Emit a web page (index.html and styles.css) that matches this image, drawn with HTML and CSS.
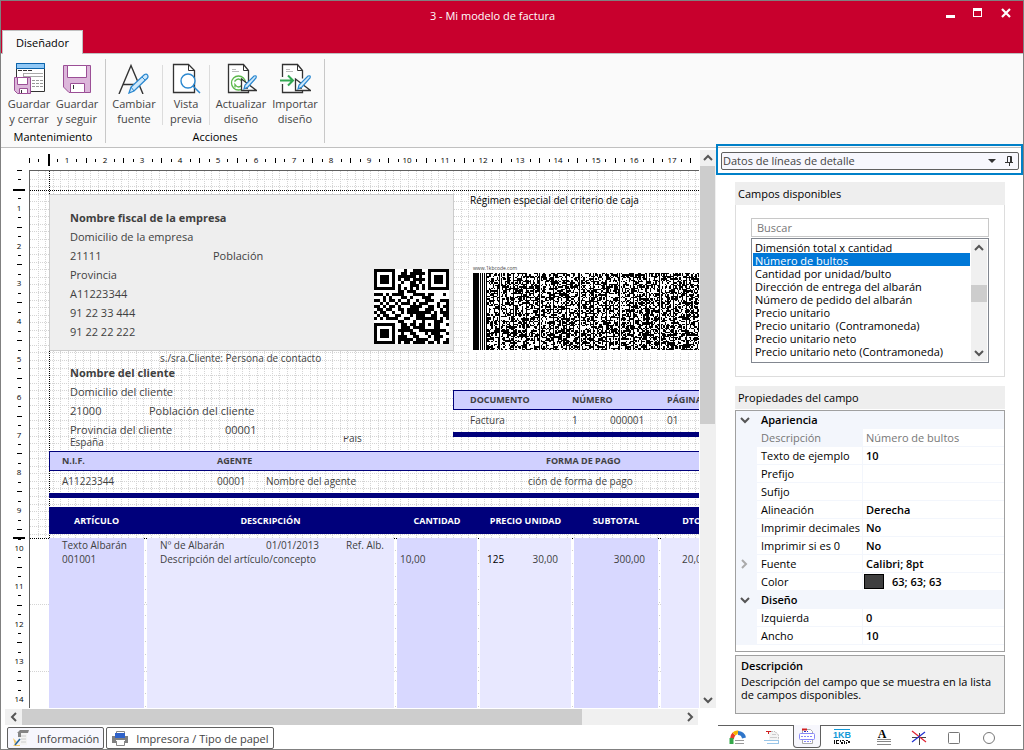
FILE: index.html
```html
<!DOCTYPE html>
<html lang="es">
<head>
<meta charset="utf-8">
<title>3 - Mi modelo de factura</title>
<link rel="stylesheet" href="styles.css">
</head>
<body>
<div class="window">
  <header class="titlebar">
    <h1 class="title">3 - Mi modelo de factura</h1>
    <div class="controls">
      <button class="control" aria-label="Minimizar"><svg width="12" height="12"><path d="M1 9h9v3H1z" fill="#fff"/></svg></button>
      <button class="control" aria-label="Maximizar"><svg width="12" height="12"><path fill-rule="evenodd" d="M1 2h9v9H1zM2 5h7v5H2z" fill="#fff"/></svg></button>
      <button class="control" aria-label="Cerrar"><svg width="12" height="12"><path d="M2 3l8 8M10 3l-8 8" stroke="#fff" stroke-width="2.2"/></svg></button>
    </div>
    <button class="ribbon-tab">Diseñador</button>
  </header>

  <div class="ribbon">
    <section class="group group-keep">
      <div class="tools">
        <button class="tool tool-48">
          <svg class="tool-icon" viewBox="0 0 32 32"><path d="M3.500 1.500h28v28h-28z" fill="#fff" stroke="#333"/><path d="M3.500 1.500h28v5h-28z" fill="#90c8f6" stroke="#0a64ad"/><path d="M5 8.500h15" stroke="#333" stroke-dasharray="4 1"/><path d="M10 11.500h20M10 14.500h20M10.500 11v5" stroke="#aaa"/><path d="M19 18.500h11M19 21.500h11M19 24.500h11" stroke="#999" stroke-dasharray="3 1"/><path d="M1.500 15.500h16v16h-13l-3-3z" fill="#dcb6da" stroke="#9b4f96"/><path d="M4.500 15.500h10v7h-10zM6.500 26.500h8v5h-8z" fill="#fff" stroke="#9b4f96"/><path d="M8.500 28v3" stroke="#333"/></svg>
          <span>Guardar<br>y cerrar</span>
        </button>
        <button class="tool tool-48">
          <svg class="tool-icon" viewBox="0 0 32 32"><path d="M2.500 3.500h27v27H8l-5.500-5.500z" fill="#dcb6da" stroke="#9b4f96"/><path d="M6.500 3.500h19v12h-19zM9.500 21.500h14v9h-14z" fill="#fff" stroke="#9b4f96"/><path d="M12.500 23v4" stroke="#333"/></svg>
          <span>Guardar<br>y seguir</span>
        </button>
      </div>
      <h2 class="group-name">Mantenimiento</h2>
    </section>
    <section class="group group-actions">
      <div class="tools">
        <button class="tool tool-56">
          <svg class="tool-icon" viewBox="0 0 32 32"><path d="M1 32L13 3.500l12 28.500M5.500 22.500h15" fill="none" stroke="#333" stroke-width="1.400"/><path d="M11 31l2-6L26.500 12.500q2-1 3 .5t0 3L16 29z" fill="#cfe8fa" stroke="#2b88d0" stroke-width="1.300"/><path d="M13 25l3 4M24 15l3 3" stroke="#2b88d0"/></svg>
          <span>Cambiar<br>fuente</span>
        </button>
        <span class="tool-rule"></span>
        <button class="tool tool-46">
          <svg class="tool-icon" viewBox="0 0 32 32"><path d="M3.500 2.500h15l6 6v22h-21z" fill="#fff" stroke="#333" stroke-width="1.300"/><path d="M18.500 2.500v6h6" fill="none" stroke="#333"/><circle cx="18" cy="19" r="7" fill="#fff" stroke="#2b88d0" stroke-width="1.400"/><path d="M23 24l7 7" stroke="#2b88d0" stroke-width="1.500"/></svg>
          <span>Vista<br>previa</span>
        </button>
        <span class="tool-rule"></span>
        <button class="tool tool-62">
          <svg class="tool-icon" viewBox="0 0 32 32"><path d="M3.500 2.500h15l5 6v22h-20z" fill="#fff" stroke="#333" stroke-width="1.300"/><path d="M18.500 2.500v6h5" fill="none" stroke="#333"/><path d="M7 7.500h4M7 9.500h7" stroke="#bbb"/><circle cx="13.500" cy="21" r="7" fill="#fff" stroke="#5cb84a" stroke-width="1.300"/><path d="M9.500 19.500q4-5 7.500 0v-3M17.500 22.500q-4 5-7.500 0v3" fill="none" stroke="#5cb84a" stroke-width="1.300"/><path d="M16.500 17v11.500h15zM20 24v2h3" fill="#fff" stroke="#333" stroke-width="1.300"/><path d="M19 27l1-4 9-9q3-1 2 2l-8 9z" fill="#cfe8fa" stroke="#2b88d0" stroke-width="1.200"/></svg>
          <span>Actualizar<br>diseño</span>
        </button>
        <button class="tool tool-46">
          <svg class="tool-icon" viewBox="0 0 32 32"><path d="M3.500 15V2.500h15l5 6v8M3.500 22v8.500h20V27" fill="#fff" stroke="#333" stroke-width="1.300"/><path d="M18.500 2.500v6h5" fill="none" stroke="#333"/><path d="M7 7.500h4M7 9.500h7" stroke="#bbb"/><path d="M1 18.500h12M9 13.500l5 5-5 5" fill="none" stroke="#32a852" stroke-width="2"/><path d="M16.500 17v11.500h15zM20 24v2h3" fill="#fff" stroke="#333" stroke-width="1.300"/><path d="M19 27l1-4 9-9q3-1 2 2l-8 9z" fill="#cfe8fa" stroke="#2b88d0" stroke-width="1.200"/></svg>
          <span>Importar<br>diseño</span>
        </button>
      </div>
      <h2 class="group-name">Acciones</h2>
    </section>
  </div>

  <div class="workspace">
    <main class="left">
      <div class="designer">
        <svg class="ruler ruler-x" id="ruler-x"></svg>
        <svg class="ruler ruler-y" id="ruler-y"></svg>
        <div class="sheet">
          <svg class="grid-lines" id="grid-lines"></svg>
          <section class="block company">
            <strong>Nombre fiscal de la empresa</strong>
            <span>Domicilio de la empresa</span>
            <span class="pair"><span>21111</span><span>Población</span></span>
            <span>Provincia</span>
            <span>A11223344</span>
            <span>91 22 33 444</span>
            <span>91 22 22 222</span>
          </section>
          <svg class="block qr" id="qr" viewBox="0 0 25 25" role="img" aria-label="Código QR"></svg>
          <p class="block small regime">Régimen especial del criterio de caja</p>
          <div class="block barcode">
            <span class="barcode-url">www.1kbcode.com</span>
            <svg id="barcode" class="barcode-image" role="img" aria-label="Código 1KB"></svg>
          </div>
          <p class="block small contact">s./sra.Cliente: Persona de contacto</p>
          <section class="block client">
            <strong>Nombre del cliente</strong>
            <span>Domicilio del cliente</span>
            <span class="pair pair-town"><span>21000</span><span>Población del cliente</span></span>
            <span class="pair pair-code"><span>Provincia del cliente</span><span>00001</span></span>
          </section>
          <p class="block small country">España</p>
          <p class="block small country-label"><span>País</span></p>

          <section class="block document">
            <div class="band doc-cols"><b>DOCUMENTO</b><b>NÚMERO</b><b>PÁGINA</b></div>
            <div class="values doc-cols"><span>Factura</span><span class="number"><span>1</span><span>000001</span></span><span>01</span></div>
          </section>
          <section class="block agent">
            <div class="band agent-cols"><b>N.I.F.</b><b>AGENTE</b><b class="pay-name">FORMA DE PAGO</b></div>
            <div class="values agent-cols"><span>A11223344</span><span class="agent-name"><span>00001</span><span>Nombre del agente</span></span><span>ción de forma de pago</span></div>
          </section>
          <section class="block lines-head line-cols">
            <b>ARTÍCULO</b><b>DESCRIPCIÓN</b><b>CANTIDAD</b><b>PRECIO UNIDAD</b><b>SUBTOTAL</b><b>DTO.</b>
          </section>
          <section class="block lines line-cols">
            <div class="cell strong-cell first"><span>Texto Albarán</span><span>001001</span></div>
            <div class="cell first"><span class="note"><span>Nº de Albarán</span><span>01/01/2013</span><span>Ref. Alb.</span></span><span>Descripción del artículo/concepto</span></div>
            <div class="cell strong-cell tight">10,00</div>
            <div class="cell price"><span class="dark">125</span><span>30,00</span></div>
            <div class="cell strong-cell right">300,00</div>
            <div class="cell discount">20,00</div>
          </section>
        </div>
        <div class="bar bar-y">
          <button class="arrow" aria-label="Subir"><svg width="10" height="8"><path d="M1 6l4-4 4 4" class="chev"/></svg></button>
          <div class="track"><div class="thumb"></div></div>
          <button class="arrow" aria-label="Bajar"><svg width="10" height="8"><path d="M1 2l4 4 4-4" class="chev"/></svg></button>
        </div>
        <div class="bar bar-x">
          <button class="arrow" aria-label="Izquierda"><svg width="8" height="10"><path d="M6 1L2 5l4 4" class="chev"/></svg></button>
          <div class="track"><div class="thumb"></div></div>
          <button class="arrow" aria-label="Derecha"><svg width="8" height="10"><path d="M2 1l4 4-4 4" class="chev"/></svg></button>
        </div>
      </div>
      <nav class="sheet-tabs">
        <button class="sheet-tab active"><svg width="18" height="18"><path d="M6 4h9v12H6z" fill="#f3f3f3"/><path d="M5 4l3-3h9l-1 3H9v4H6V4" fill="#858585"/><path d="M9 7h5M9 10h5M9 13h5" stroke="#ccc"/><path d="M1 9l4 4-4 4h7v-1H3z" fill="#f0c868"/><path d="M3 16l5-6" stroke="#24639b" stroke-width="1.500"/></svg>Información</button>
        <button class="sheet-tab"><svg width="18" height="18"><path d="M5.500 6V2.500h8V6M5.500 12v4.500h8V12" fill="#fff" stroke="#888"/><path d="M1 7h16v7h-3v-3H5v3H1z" fill="#808080"/><path d="M4 4h10v5H4z" fill="#2f62c9"/></svg>Impresora / Tipo de papel</button>
      </nav>
    </main>

    <aside class="side">
      <div class="focus-frame">
        <div class="source">
          <select class="source-select" aria-label="Datos"><option>Datos de líneas de detalle</option></select>
          <svg class="source-arrow" width="8" height="4"><path d="M0 0h8L4 4z" fill="#333"/></svg>
          <button class="pin" aria-label="Fijar"><svg width="9" height="10"><path d="M2.500 6V.5h4V6M5.500 1v5M0 6.500h8M4.500 7v3" fill="none" stroke="#333"/></svg></button>
        </div>
      </div>
      <div class="panels">
        <section class="fields">
          <h2 class="panel-title">Campos disponibles</h2>
          <div class="fields-body">
            <input class="search" type="text" placeholder="Buscar" aria-label="Buscar">
            <div class="list-box">
              <select class="list" size="10" aria-label="Campos disponibles">
                <option>Dimensión total x cantidad</option>
                <option selected>Número de bultos</option>
                <option>Cantidad por unidad/bulto</option>
                <option>Dirección de entrega del albarán</option>
                <option>Número de pedido del albarán</option>
                <option>Precio unitario</option>
                <option>Precio unitario&nbsp; (Contramoneda)</option>
                <option>Precio unitario neto</option>
                <option>Precio unitario neto (Contramoneda)</option>
                <option>Peso unitario</option>
              </select>
              <div class="bar list-bar">
                <button class="arrow" aria-label="Subir"><svg width="10" height="8"><path d="M1 6l4-4 4 4" class="chev"/></svg></button>
                <div class="track"><div class="thumb"></div></div>
                <button class="arrow" aria-label="Bajar"><svg width="10" height="8"><path d="M1 2l4 4 4-4" class="chev"/></svg></button>
              </div>
            </div>
          </div>
        </section>

        <section class="properties">
          <h2 class="panel-title">Propiedades del campo</h2>
          <div class="props-box">
            <table class="props">
              <colgroup><col class="col-mark"><col class="col-name"><col></colgroup>
              <tbody>
                <tr class="section"><td><svg width="10" height="8"><path d="M1 2l4 4 4-4" class="chev"/></svg></td><th colspan="2">Apariencia</th></tr>
                <tr class="readonly"><td></td><th>Descripción</th><td>Número de bultos</td></tr>
                <tr><td></td><th>Texto de ejemplo</th><td>10</td></tr>
                <tr><td></td><th>Prefijo</th><td></td></tr>
                <tr><td></td><th>Sufijo</th><td></td></tr>
                <tr><td></td><th>Alineación</th><td>Derecha</td></tr>
                <tr><td></td><th>Imprimir decimales</th><td>No</td></tr>
                <tr><td></td><th>Imprimir si es 0</th><td>No</td></tr>
                <tr><td><svg width="8" height="10"><path d="M2 1l4 4-4 4" class="chev chev-pale"/></svg></td><th>Fuente</th><td>Calibri; 8pt</td></tr>
                <tr><td></td><th>Color</th><td class="color-value"><span class="swatch"></span>63; 63; 63</td></tr>
                <tr class="section"><td><svg width="10" height="8"><path d="M1 2l4 4 4-4" class="chev"/></svg></td><th colspan="2">Diseño</th></tr>
                <tr><td></td><th>Izquierda</th><td>0</td></tr>
                <tr><td></td><th>Ancho</th><td>10</td></tr>
              </tbody>
            </table>
          </div>
          <div class="help"><h3>Descripción</h3><p>Descripción del campo que se muestra en la lista de campos disponibles.</p></div>
        </section>
      </div>
      <nav class="tool-tabs">
        <button class="tool-tab" aria-label="Imagen"><svg width="18" height="18"><path d="M4 10q0-3 2-5" stroke="#e83c28" stroke-width="4" fill="none"/><path d="M3.500 15V9" stroke="#35a84a" stroke-width="4"/><path d="M6 5q2-2 4-1.500" stroke="#f4b400" stroke-width="4" fill="none"/><path d="M10 4q5 0 6 5" stroke="#2f75c9" stroke-width="4" fill="none"/><path d="M7 11.500h9M7 14.500h9" stroke="#999"/></svg></button>
        <button class="tool-tab" aria-label="Pie"><svg width="18" height="18"><path d="M6 2h6l3 3v6H6z" fill="#f4f4f4"/><path d="M8 2.500h4M12.500 3l3 3v5" fill="none" stroke="#bbb" stroke-dasharray="2 1"/><path d="M3 2.500h5M5.500 3v2" stroke="#d02020"/><path d="M9 5.500h4M7 8.500h7" stroke="#ccc"/><path d="M1 11.500h15M15.500 11v4M4 14.500h12" fill="none" stroke="#9ac6e8"/></svg></button>
        <button class="tool-tab active" aria-label="Datos de líneas de detalle"><svg width="18" height="18"><path d="M4.500 7V2.500h8l2 2V7M4.500 11v5.500h10V11" fill="#fff" stroke="#aaa"/><path d="M4 2.500h5" stroke="#d02020" stroke-width="2"/><path d="M6 4.500h4" stroke="#2030c0" stroke-dasharray="2 1"/><rect x="1.500" y="6.500" width="15" height="6" rx="1" fill="#fff" stroke="#8888f8"/><path d="M3 9.500h12M6 14.500h7" stroke="#8888f8" stroke-dasharray="2 1"/></svg></button>
        <button class="tool-tab" aria-label="Código 1KB"><svg width="18" height="18"><text x="9" y="9" text-anchor="middle" class="kb-text">1KB</text><path d="M1 .5h16" stroke="#1299d8"/><path d="M1 11h1v4H1zM3 11h3v1H4v2h2v1H3zM7 11h1v2h-1zM8 13h2v2H8zM9 11h2v1H9zM11 12h1v3h-1zM13 11h2v1h-2zM13 13h1v2h-1zM15 12h2v2h-2z" fill="#111"/></svg></button>
        <button class="tool-tab after-gap" aria-label="Texto"><svg width="18" height="18"><text x="7" y="9" text-anchor="middle" class="a-text">A</text><path d="M2 10.500h14M2 12.500h14M2 15.500h14" stroke="#888"/></svg></button>
        <button class="tool-tab" aria-label="Línea"><svg width="18" height="18"><path d="M9.500 4v12M2 8.500h14" stroke="#444"/><path d="M2 2l14 11" stroke="#e02030" stroke-width="1.200"/><path d="M15 3L2 13" stroke="#2030d0" stroke-width="1.200"/></svg></button>
        <button class="tool-tab" aria-label="Rectángulo"><svg width="18" height="18"><rect x="3.500" y="3.500" width="11" height="11" rx="1" fill="#fff" stroke="#777"/></svg></button>
        <button class="tool-tab" aria-label="Elipse"><svg width="18" height="18"><circle cx="9" cy="9" r="5.500" fill="#fff" stroke="#777"/></svg></button>
      </nav>
    </aside>
  </div>
</div>
<script src="designer.js"></script>
</body>
</html>
```
FILE: designer.js
```js
const CM = 96 / 2.54;
const NS = 'http://www.w3.org/2000/svg';

function add(parent, tag, attrs, text) {
  const el = document.createElementNS(NS, tag);
  for (const key in attrs) el.setAttribute(key, attrs[key]);
  if (text !== undefined) el.textContent = text;
  parent.appendChild(el);
}

// Rulers: a number on each centimetre, a long tick on each half, a short one on each quarter.
function drawRuler(svg, vertical, start, markers) {
  svg.replaceChildren();
  let ticks = markers;
  const mid = vertical ? 14 : 12;
  const box = svg.getBoundingClientRect();
  const end = (vertical ? box.height : box.width) - 4;
  for (let q = 0; start + q * CM / 4 < end; q++) {
    const p = Math.round(start + q * CM / 4);
    if (q % 4 === 0 && q > 0) {
      add(svg, 'text', vertical ? { x: mid, y: p + 3 } : { x: p, y: mid + 3 }, q / 4);
      continue;
    }
    if (q === 2) continue;
    const half = q % 2 ? 1 : 2;
    const len = half * 2 + 1;
    ticks += vertical ? `M${mid - half} ${p}h${len}v1h-${len}z` : `M${p} ${mid - half}v${len}h1v-${len}z`;
  }
  add(svg, 'path', { d: ticks });
}

function drawRulers() {
  drawRuler(document.getElementById('ruler-x'), false, 24, 'M43 6h2v12h-2z');
  // The second marker is the end of the header area.
  drawRuler(document.getElementById('ruler-y'), true, 22, 'M8 41h12v2H8zM8 389h12v2H8z');
}
drawRulers();
addEventListener('resize', drawRulers);

// Snap grid of 2 mm, and the dotted margins over it.
const grid = document.getElementById('grid-lines');
let lines = '';
for (let i = 1; i < 300; i++) {
  const p = Math.round(i * CM / 5) + 0.5;
  lines += `M${p} 0V367`;
  if (p < 367) lines += `M0 ${p}H3000`;
}
add(grid, 'path', { d: lines, class: 'dots' });
add(grid, 'path', { d: 'M19.5 0V367M0 19.5H3000M0 367.5H3000', class: 'margins' });
add(grid, 'path', { d: 'M0 433.5H3000M0 500.5H3000', class: 'dots' });
add(grid, 'path', { d: 'M115.5 379V3000M365.5 379V3000M448.5 379V3000M542.5 379V3000M629.5 379V3000', class: 'sparse' });

const qrRows = [
  '1111111000100111001111111',
  '1000001001101111101000001',
  '1011101011111101001011101',
  '1011101010110111101011101',
  '1011101001001101001011101',
  '1000001010001110101000001',
  '1111111010101010101111111',
  '0000000011011100000000000',
  '1110101111000111101100010',
  '0001010001101000111000000',
  '1101011010010010011100111',
  '0010100101110101110001001',
  '1101011010001111001101011',
  '0110110011011110011100101',
  '1011001001011111111010111',
  '0101100110001011100110011',
  '1010111100110011111110101',
  '0000000011000100100011100',
  '1111111001101101101011001',
  '1000001001110111100011000',
  '1011101011111001111111110',
  '1011101001001100010111001',
  '1011101011100110001011100',
  '1000001011111011110011001',
  '1111111010110111101101011'
];
let modules = '';
qrRows.forEach((row, y) => [...row].forEach((v, x) => { if (v === '1') modules += `M${x} ${y}h1v1h-1z`; }));
const qr = document.getElementById('qr');
add(qr, 'path', { d: 'M0 0h25v25H0z', fill: '#fff' });
add(qr, 'path', { d: modules, fill: '#000', 'shape-rendering': 'crispEdges' });

// Dense 2D code: start bars, then data modules with a guide bar on every tenth column.
let seed = 7;
const random = () => (seed = (seed * 16807) % 2147483647) / 2147483647;
const edge = n => Math.round(n * 4 / 3);
let bars = 'M0 0h6v77H0zM7 0h1v77H7zM9 0h1v77H9zM11 0h1v77H11z';
for (let col = 0; col < 400; col++) {
  const x = 13 + edge(col);
  const w = edge(col + 1) - edge(col);
  if (col % 10 === 0) { bars += `M${x} 0h1v77h-1z`; continue; }
  for (let row = 0; row < 58; row++) {
    const y = edge(row);
    const h = edge(row + 1) - y;
    if (random() < 0.52) bars += `M${x} ${y}h${w}v${h}h-${w}z`;
  }
}
add(document.getElementById('barcode'), 'path', { d: bars, 'shape-rendering': 'crispEdges' });
```
FILE: styles.css
```css
* { box-sizing: border-box; }

body {
  margin: 0;
  font: 11px/15px "Open Sans", "Noto Sans", sans-serif;
  color: #000;
}

h1, h2, h3, p { margin: 0; font: inherit; }

button, input, select {
  margin: 0;
  padding: 0;
  border: 0;
  background: none;
  font: inherit;
  color: inherit;
}

svg { display: block; }

.window {
  display: flex;
  flex-direction: column;
  height: 100vh;
  border: 1px solid #808080;
  background: #fff;
}

/* Title bar */
.titlebar {
  display: grid;
  grid-template-columns: 1fr 86px;
  grid-template-rows: 29px 23px;
  flex: none;
  background: #c8002d;
  border-bottom: 1px solid #c0c0c0;
}
.title { padding: 7px 0 0 47px; text-align: center; color: #fff; }
.controls { display: flex; justify-content: space-around; padding: 5px 3px 0 0; }
.control { width: 22px; height: 14px; display: flex; justify-content: center; }
.ribbon-tab {
  justify-self: start;
  width: 81px;
  margin-left: 1px;
  height: 24px;
  background: #fafafa;
  border: 1px solid #c0c0c0;
  border-bottom: 0;
}

/* Ribbon */
.ribbon {
  display: flex;
  flex: none;
  height: 94px;
  padding: 5px 0 4px;
  background: #fafafa;
  border-bottom: 1px solid #c0c0c0;
}
.group {
  display: flex;
  flex-direction: column;
  border-right: 1px solid #c8c8c8;
}
.group-keep { padding: 0 4px; }
.group-actions { padding-right: 6px; }
.tools { display: flex; padding-top: 3px; }
.tool {
  display: flex;
  flex-direction: column;
  align-items: center;
  gap: 2px;
  color: #444;
  white-space: nowrap;
}
.tool-46 { width: 46px; }
.tool-48 { width: 48px; }
.tool-56 { width: 56px; }
.tool-62 { width: 62px; }
.tool-icon { width: 32px; height: 32px; }
.tool-rule { width: 1px; height: 60px; margin-top: 3px; background: #dcdcdc; }
.group-name { margin-top: auto; text-align: center; line-height: 12px; }
.group-actions .group-name { padding-left: 6px; }

/* Workspace */
.workspace { display: flex; flex: 1; min-height: 0; }
.left { flex: 1; min-width: 0; display: flex; flex-direction: column; }
.designer {
  flex: 1;
  min-height: 0;
  display: grid;
  grid-template-columns: 24px 1fr 17px;
  grid-template-rows: 22px 1fr 17px;
  padding-left: 4px;
}
.ruler { width: 100%; height: 100%; overflow: hidden; font-size: 8px; text-anchor: middle; }
.ruler-x { grid-area: 1 / 1 / 2 / 3; }
.ruler-y { grid-area: 1 / 1 / 3 / 2; }

.bar { display: flex; background: #f0f0f0; }
.bar-y { grid-area: 1 / 3 / 3 / 4; flex-direction: column; margin: 2px 0 0 1px; }
.bar-x { grid-area: 3 / 1 / 4 / 3; margin: 1px 1px 0 0; }
.arrow { flex: none; width: 16px; height: 16px; display: flex; align-items: center; justify-content: center; }
.bar-x .arrow { width: 17px; }
.track { flex: 1; }
.thumb { background: #cdcdcd; }
.bar-y .thumb { width: 15px; height: 49%; }
.bar-x .thumb { height: 100%; width: 85%; }
.chev { fill: none; stroke: #555; stroke-width: 2; }
.chev-pale { stroke: #aaa; }

/* Sheet: a free canvas, each block sits where the user dropped it */
.sheet {
  grid-area: 2 / 2 / 3 / 3;
  position: relative;
  overflow: hidden;
  border: solid #606060;
  border-width: 1px 0 0 1px;
  color: #3f3f3f;
  white-space: nowrap;
}
.grid-lines { position: absolute; inset: 0; width: 100%; height: 100%; }
.dots { fill: none; stroke: #d4d4d4; stroke-dasharray: 1 1; shape-rendering: crispEdges; }
.sparse { fill: none; stroke: #ccc; stroke-dasharray: 1 12; }
.margins { fill: none; stroke: #000; stroke-dasharray: 1 1; shape-rendering: crispEdges; }
.block { position: absolute; }
.small, .values, .lines { font-size: 10px; }
.band, .lines-head { font-size: 9px; }

.company {
  left: 19px; top: 23px;
  width: 405px; height: 157px;
  display: flex;
  flex-direction: column;
  padding: 13px 0 0 20px;
  line-height: 19px;
  background: #eee;
  border: 1px solid #ccc;
}
.pair { display: grid; grid-template-columns: 143px auto; }
.pair-town { grid-template-columns: 79px auto; }
.pair-code { grid-template-columns: 155px auto; }
.qr { left: 344px; top: 98px; width: 75px; height: 75px; }
.regime { left: 440px; top: 22px; color: #000; }
.barcode { left: 440px; top: 91px; right: 0; padding: 1px 0 3px 3px; background: #fff; }
.barcode-url { display: block; font-size: 5px; line-height: 10px; }
.barcode-image { width: 100%; height: 77px; }
.contact { left: 130px; top: 180px; }
.client {
  left: 40px; top: 192px;
  display: flex;
  flex-direction: column;
  line-height: 19px;
}
.country { left: 40px; top: 264px; }
.country-label { left: 313px; top: 265px; height: 8px; overflow: hidden; display: flex; align-items: flex-end; line-height: 12px; }

.band { line-height: 18px; background: #d0d0ff; border: 1px solid #00007b; border-right: 0; }
.values { height: 27px; line-height: 20px; border-bottom: 5px solid #00007b; }
.document { left: 423px; top: 219px; right: 0; }
.document .values { padding-left: 17px; }
.document .band { padding-left: 16px; }
.doc-cols { display: grid; grid-template-columns: 102px 95px 1fr; }
.number { display: grid; grid-template-columns: 38px auto; }
.agent { left: 19px; top: 280px; right: 0; }
.agent .band { padding-left: 12px; }
.agent .values { padding-left: 13px; }
.agent-cols { display: grid; grid-template-columns: 155px 311px 1fr; }
.agent-name { display: grid; grid-template-columns: 49px auto; }
.pay-name { padding-left: 18px; }

.line-cols { display: grid; grid-template-columns: 95px 247px 80px 91px 84px 64px; column-gap: 3px; }
.lines-head { left: 19px; top: 336px; right: 0; height: 27px; line-height: 28px; text-align: center; color: #fff; background: #00007b; }
.lines { left: 19px; top: 367px; bottom: 0; }
.cell { background: #e8e8ff; padding-top: 14px; }
.strong-cell { background: #d8d8ff; }
.first { display: flex; flex-direction: column; padding: 0 0 0 13px; line-height: 14px; }
.note { display: grid; grid-template-columns: 106px 80px auto; }
.tight { padding-left: 3px; }
.price { display: flex; justify-content: space-between; padding-left: 7px; padding-right: 13px; }
.dark { color: #000; }
.right { text-align: right; padding-right: 13px; }
.discount { padding-left: 21px; }

.sheet-tabs { display: flex; flex: none; height: 24px; padding: 2px 0 0 6px; gap: 2px; }
.sheet-tab {
  display: flex;
  align-items: center;
  gap: 7px;
  padding: 0 4px;
  color: #444;
  border: 1px solid #606060;
  border-radius: 2px;
}
.sheet-tab.active { background: #f7f7fd; }

/* Side panel */
.side { width: 307px; flex: none; display: flex; flex-direction: column; }
.focus-frame {
  position: relative;
  flex: none;
  margin-top: -4px;
  padding: 6px 2px 3px 3px;
  border: 2px solid #0080c8;
}
.source {
  display: flex;
  align-items: center;
  height: 18px;
  background: #f7f7fd;
  border: 1px solid #606060;
  border-radius: 2px;
}
.source-select { flex: 1; appearance: none; padding-left: 1px; height: 16px; line-height: 14px; color: #444; }
.pin { width: 18px; margin-left: 4px; display: flex; justify-content: center; }
.panels { flex: 1; min-height: 0; padding: 7px 18px 0 19px; overflow: hidden; }
.panel-title { height: 23px; padding-left: 3px; line-height: 23px; background: #eee; }
.fields-body { padding: 13px 15px; border: 1px solid #ddd; border-top: 0; }
.search { display: block; width: 100%; height: 19px; padding-left: 5px; border: 1px solid #c8c8c8; }
.search::placeholder { color: #777; }
.list-box { display: flex; height: 125px; margin-top: 1px; padding: 1px; border: 1px solid #828790; }
.list { flex: 1; min-width: 0; height: 121px; overflow: hidden; outline: 0; }
.list::-webkit-scrollbar { display: none; }
.list option { height: 13px; min-height: 13px; padding: 0 2px; line-height: 12px; color: #000; }
.list option:checked { background: linear-gradient(#0078d7, #0078d7); -webkit-text-fill-color: #fff; }
.list-bar { flex: none; width: 16px; flex-direction: column; margin-left: 1px; }
.list-bar .thumb { height: 17px; margin-top: 29px; }

.properties { margin-top: 9px; }
.props-box { height: 242px; margin-top: 1px; border: 1px solid #a0a0a0; }
.props { width: 100%; table-layout: fixed; border-spacing: 0; }
.col-mark { width: 21px; }
.col-name { width: 105px; }
.props th, .props td { height: 18px; padding: 0 0 0 4px; line-height: 17px; text-align: left; border-bottom: 1px solid #f3f6fc; }
.props th { font-weight: 400; white-space: nowrap; }
.props td { font-weight: 600; border-left: 1px solid #f3f6fc; padding-left: 3px; }
.props td:first-child { background: #f3f6fc; border-left: 0; padding-left: 4px; }
.props .section th { font-weight: 600; background: #f3f6fc; }
.props .readonly th, .props .readonly td { color: #777; font-weight: 400; }
.props .readonly th { background: #f3f6fc; }
.props .color-value { padding-left: 1px; }
.swatch { display: inline-block; width: 20px; height: 15px; margin: 1px 8px 0 0; vertical-align: top; background: #3f3f3f; border: 1px solid #000; }

.help { height: 59px; margin-top: 3px; padding: 2px 5px; line-height: 13px; background: #efefef; border: 1px solid #a0a0a0; }
.help h3 { font-weight: 600; line-height: 15px; }
.help p { margin-top: 2px; }

.tool-tabs {
  display: flex;
  flex: none;
  height: 24px;
  margin: 0 2px;
  padding-left: 5px;
  gap: 7px;
  border-top: 1px solid #606060;
}
.tool-tab { flex: none; width: 28px; height: 23px; display: flex; align-items: center; justify-content: center; }
.tool-tab.active { margin-top: -1px; background: #f7f7fd; border: 1px solid #606060; border-top: 0; border-radius: 0 0 4px 4px; }
.after-gap { margin-left: 7px; }
.kb-text { font: 700 9px "Liberation Sans", sans-serif; fill: #1299d8; }
.a-text { font: 700 12px "Liberation Serif", serif; }
```
